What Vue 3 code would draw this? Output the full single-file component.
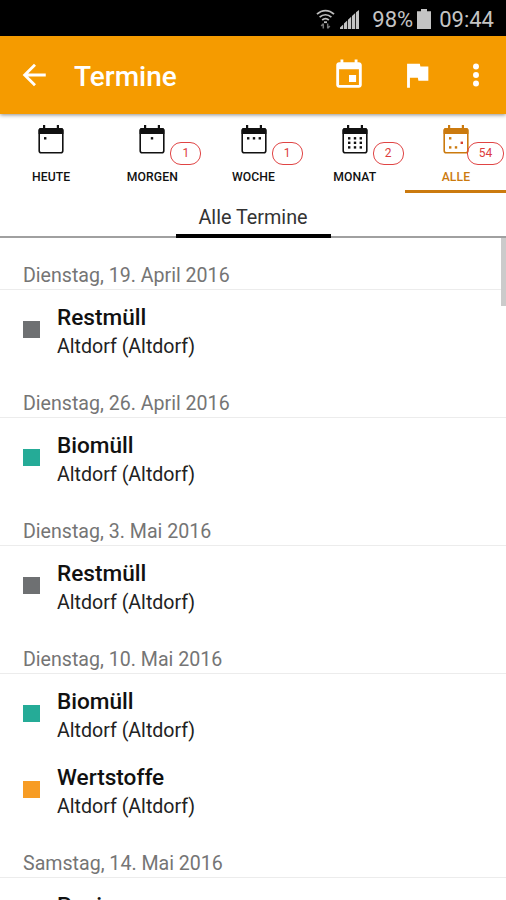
<template>
  <div class="app-container">
    <!-- status bar -->
    <div class="status-bar">
      <svg class="wifi" width="19" height="21" viewBox="0 0 19 21" fill="none" stroke="#bdbdbd" stroke-width="1.8">
        <path d="M1 5.2C6 .4 13 .4 18 5.2" />
        <path d="M3.6 8.2c3.6-3.2 8.2-3.2 11.8 0" />
        <path d="M6.2 11c2-1.7 4.6-1.7 6.6 0" />
        <path d="M8 13.2h3" />
        <path d="M7.3 19.5v-5M5.2 17l2.1-2.3M11.7 14.5v5M13.8 17l-2.1 2.3" stroke="#777" stroke-width="1.5" />
      </svg>
      <svg class="signal" width="20" height="19" viewBox="0 0 20 19" fill="#c4c4c4">
        <path d="M0 19v-1.5l3.2-3V19zM4 19v-5.4l3.2-3V19zM8 19V9.8l3.2-3V19zM12 19V6l3.2-3v16zM16 19V2.2L19 0v19z" />
      </svg>
      <span class="percent">98%</span>
      <svg class="battery" width="14" height="20" viewBox="0 0 14 20" fill="#c4c4c4">
        <path d="M4 0h6v2.2h4V20H0V2.2h4z" />
      </svg>
      <span class="clock">09:44</span>
    </div>

    <!-- app bar -->
    <header class="app-bar">
      <svg class="back" width="34" height="34" viewBox="0 0 24 24" fill="none" stroke="#fff" stroke-width="2">
        <path d="M20.3 12H5.6M12.7 4.7L5.4 12l7.3 7.3" />
      </svg>
      <h1>Termine</h1>
      <svg width="34" height="34" viewBox="0 0 24 24" fill="#fff">
        <path d="M17 12h-5v5h5v-5zM16 1v2H8V1H6v2H5c-1.11 0-1.99.9-1.99 2L3 19c0 1.1.89 2 2 2h14c1.1 0 2-.9 2-2V5c0-1.1-.9-2-2-2h-1V1h-2zm3 18H5V8h14v11z" />
      </svg>
      <svg class="flag" width="34" height="34" viewBox="0 0 24 24" fill="#fff">
        <path d="M14.4 6L14 4H5v17h2v-7h5.6l.4 2h7V6z" />
      </svg>
      <svg class="more" width="34" height="34" viewBox="0 0 24 24" fill="#fff">
        <circle cx="12" cy="6" r="2.1" />
        <circle cx="12" cy="12" r="2.1" />
        <circle cx="12" cy="18" r="2.1" />
      </svg>
    </header>

    <nav class="tabs">
      <div v-for="tab in tabs" :key="tab.label" class="tab" :class="{ active: tab.label === activeTab }">
        <div class="tab-icon">
          <svg width="26" height="29" viewBox="0 0 26 29">
            <path d="M5 0h2.2v4H5zM18.8 0H21v4h-2.2z" fill="currentColor" />
            <rect x="1.2" y="3.8" width="23.6" height="24" rx="2" fill="none" stroke="currentColor" stroke-width="1.6" />
            <path d="M.6 9V5a2 2 0 0 1 2-2h20.8a2 2 0 0 1 2 2v4z" fill="currentColor" />
            <rect
              v-for="(dot, i) in tab.dots"
              :key="i"
              :x="dot[0] - 1.2"
              :y="dot[1] - 1.2"
              width="2.4"
              height="2.4"
              :fill="dot[2] || 'currentColor'"
            />
          </svg>
          <span v-if="tab.count" class="badge" :class="{ wide: tab.count > 9 }">{{ tab.count }}</span>
        </div>
        <span class="tab-label">{{ tab.label }}</span>
      </div>
    </nav>

    <div class="sub-tabs">
      <div class="sub-tab">Alle Termine</div>
    </div>

    <main class="list">
      <section v-for="group in groups" :key="group.date">
        <h2 class="date">{{ group.date }}</h2>
        <div v-for="item in group.items" :key="item.name" class="item">
          <span class="marker" :class="item.type"></span>
          <div class="item-text">
            <div class="name">{{ item.name }}</div>
            <div class="place">Altdorf (Altdorf)</div>
          </div>
        </div>
      </section>
      <div class="scrollbar"></div>
    </main>
  </div>
</template>

<script setup>
import { ref } from 'vue'

const activeTab = ref('ALLE')

// dots: x, y and optional colour inside the calendar sheet
const tabs = [
  { label: 'HEUTE', dots: [[7.2, 13.3]] },
  { label: 'MORGEN', count: 1, dots: [[13, 13.3]] },
  { label: 'WOCHE', count: 1, dots: [[7.2, 13.3], [13, 13.3], [18.8, 13.3]] },
  {
    label: 'MONAT',
    count: 2,
    dots: [
      [7.2, 13.3], [13, 13.3], [18.8, 13.3],
      [7.2, 17.8], [13, 17.8], [18.8, 17.8],
      [7.2, 22.4], [13, 22.4], [18.8, 22.4]
    ]
  },
  { label: 'ALLE', count: 54, dots: [[7.2, 13.3], [18.8, 17.8, '#d8402c'], [7.2, 22.4], [13, 22.4]] }
]

const groups = [
  { date: 'Dienstag, 19. April 2016', items: [{ name: 'Restmüll', type: 'rest' }] },
  { date: 'Dienstag, 26. April 2016', items: [{ name: 'Biomüll', type: 'bio' }] },
  { date: 'Dienstag, 3. Mai 2016', items: [{ name: 'Restmüll', type: 'rest' }] },
  {
    date: 'Dienstag, 10. Mai 2016',
    items: [
      { name: 'Biomüll', type: 'bio' },
      { name: 'Wertstoffe', type: 'wert' }
    ]
  },
  { date: 'Samstag, 14. Mai 2016', items: [{ name: 'Papier', type: 'papier' }] }
]
</script>

<style>
body {
  margin: 0;
  overflow: hidden;
}
</style>

<style scoped>
.app-container {
  display: flex;
  flex-direction: column;
  width: 506px;
  height: 900px;
  overflow: hidden;
  background: #fff;
  color: #111;
  font-family: Roboto, "Liberation Sans", sans-serif;
}

.app-container * {
  box-sizing: border-box;
}

.app-container svg {
  flex: none;
  display: block;
}

.status-bar {
  flex: none;
  height: 36px;
  display: flex;
  align-items: center;
  justify-content: flex-end;
  padding: 2px 12px 0 0;
  background: #000;
  color: #c4c4c4;
  font-size: 22px;
}

.signal {
  margin: 0 12px 0 5px;
}

.battery {
  margin: 0 8px 0 4px;
}

.app-bar {
  flex: none;
  height: 78px;
  display: flex;
  align-items: center;
  padding: 0 13px 0 17px;
  background: #f59b00;
  color: #fff;
  box-shadow: 0 1px 4px rgba(0, 0, 0, 0.45);
  z-index: 1;
}

.app-bar h1 {
  flex: 1;
  margin: 2px 0 0 23px;
  font-size: 28px;
  font-weight: 500;
}

.flag {
  margin-left: 34px;
}

.more {
  margin-left: 25px;
}

.tabs {
  flex: none;
  height: 79px;
  display: flex;
}

.tab {
  flex: 1;
  display: flex;
  flex-direction: column;
  align-items: center;
  padding: 11px 0 0 1px;
  border-bottom: 3px solid transparent;
}

.tab.active {
  color: #cb7a0e;
  border-bottom-color: #cb7a0e;
}

.tab-icon {
  position: relative;
}

.badge {
  position: absolute;
  left: 31px;
  top: 17px;
  width: 31px;
  height: 23px;
  border: 1.5px solid #e04444;
  border-radius: 11px;
  color: #dc3c3c;
  font-size: 12px;
  line-height: 20px;
  text-align: center;
}

.badge.wide {
  left: 24px;
  width: 37px;
}

.tab-label {
  margin-top: 16px;
  font-size: 12.2px;
  line-height: 15px;
  font-weight: 500;
  letter-spacing: 0.1px;
}

.sub-tabs {
  flex: none;
  height: 45px;
  display: flex;
  justify-content: center;
  box-shadow: inset 0 -2px #a0a0a0;
}

.sub-tab {
  width: 155px;
  border-bottom: 4px solid #000;
  color: #333;
  font-size: 19.8px;
  line-height: 49px;
  text-align: center;
}

.list {
  position: relative;
  flex: 1;
  min-height: 0;
  overflow: hidden;
}

.date {
  height: 52px;
  margin: 0;
  padding: 26px 0 0 23px;
  border-bottom: 1px solid #ececec;
  color: #757575;
  font-size: 19.6px;
  line-height: 24px;
  font-weight: 400;
}

.item {
  height: 76px;
  display: flex;
  align-items: flex-start;
  padding: 12px 23px 0;
}

.marker {
  width: 17px;
  height: 17px;
  margin: 19px 17px 0 0;
}

.rest {
  background: #6e7072;
}

.bio {
  background: #25ab97;
}

.wert {
  background: #f79c24;
}

.papier {
  background: #3f74b8;
}

.name {
  padding-top: 2px;
  font-size: 22.6px;
  line-height: 28px;
  font-weight: 500;
}

.place {
  padding-top: 1px;
  font-size: 19.6px;
  line-height: 28px;
  color: #222;
}

.scrollbar {
  position: absolute;
  top: 0;
  right: 0;
  width: 5px;
  height: 68px;
  background: #cbcbcb;
}
</style>
